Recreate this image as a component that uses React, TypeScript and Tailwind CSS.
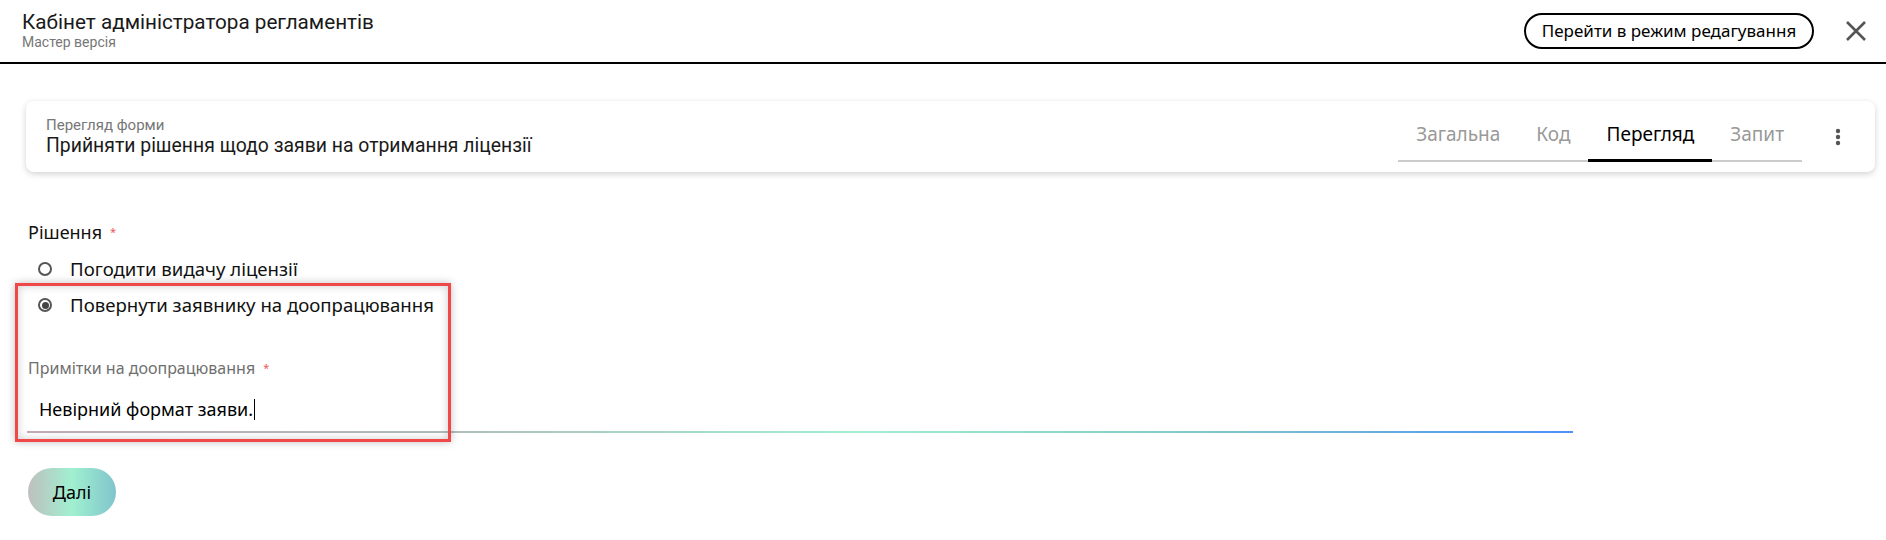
const tabs = [
  { label: "Загальна", active: false },
  { label: "Код", active: false },
  { label: "Перегляд", active: true },
  { label: "Запит", active: false },
];

const roboto = "font-['Roboto',_'Liberation_Sans',_sans-serif]";
const ua = "font-['Noto_Sans',_'Open_Sans',_sans-serif]";

function Radio({ checked, label }: { checked: boolean; label: string }) {
  return (
    <label className="flex h-[36px] items-center gap-[18px] pl-[10px]">
      <span className="flex size-[14px] items-center justify-center rounded-full border-2 border-[#555]">
        {checked && <span className="size-[7px] rounded-full bg-[#444]" />}
      </span>
      <span className={`${ua} text-[18.6px] text-[#111]`}>{label}</span>
    </label>
  );
}

export default function App() {
  return (
    <div className="relative min-h-[540px] w-[1886px] bg-white text-black">
      <header className="flex h-[64px] items-start justify-between border-b-2 border-black pl-[22px] pr-[19px]">
        <div className={`${roboto} pt-[10px]`}>
          <div className="text-[20.7px] leading-[24px] text-[#1a1a1a]">Кабінет адміністратора регламентів</div>
          <div className="text-[14px] leading-[16px] text-[#777]">Мастер версія</div>
        </div>
        <div className="flex items-center gap-[31px] pt-[13px]">
          <button className={`${ua} h-[36px] w-[290px] rounded-full border-2 border-black text-[17px] text-black`}>
            Перейти в режим редагування
          </button>
          <svg width="22" height="22" viewBox="0 0 22 22" className="text-[#555]">
            <path d="M2 2 L20 20 M20 2 L2 20" stroke="currentColor" strokeWidth="2.6" strokeLinecap="butt" />
          </svg>
        </div>
      </header>

      <section className="ml-[26px] mr-[11px] mt-[37px] flex h-[71px] items-center justify-between rounded-lg bg-white pl-[20px] pr-[34px] shadow-[0_2px_6px_rgba(0,0,0,0.18)]">
        <div className={roboto}>
          <div className="text-[15px] leading-[18px] text-[#777]">Перегляд форми</div>
          <div className="text-[19.4px] leading-[24px] text-[#1a1a1a]">Прийняти рішення щодо заяви на отримання ліцензії</div>
        </div>
        <div className="flex h-full items-center gap-[33px]">
          <nav className="mb-[10px] flex self-end border-b-2 border-[#ccc]">
            {tabs.map((t) => (
              <div
                key={t.label}
                className={`${ua} -mb-[2px] px-[18px] pb-[11px] text-[19px] ${
                  t.active ? "border-b-[3px] border-black text-black" : "border-b-[3px] border-transparent text-[#999]"
                }`}
              >
                {t.label}
              </div>
            ))}
          </nav>
          <svg width="6" height="18" viewBox="0 0 6 18" className="text-[#555]">
            <circle cx="3" cy="3" r="2.2" fill="currentColor" />
            <circle cx="3" cy="9" r="2.2" fill="currentColor" />
            <circle cx="3" cy="15" r="2.2" fill="currentColor" />
          </svg>
        </div>
      </section>

      <main className="pl-[28px] pt-[48px]">
        <div className={`${ua} flex items-center gap-[8px] text-[18px] leading-[24px] text-[#111]`}>
          Рішення <span className="text-[11px] text-[#e55]">*</span>
        </div>
        <div className="mt-[7px]">
          <Radio checked={false} label="Погодити видачу ліцензії" />
          <Radio checked label="Повернути заявнику на доопрацювання" />
        </div>

        <div className="-ml-[1px] mt-[35px] w-[1546px]">
          <div className={`${ua} flex items-center gap-[8px] pl-[1px] text-[16px] leading-[20px] text-[#6f6f6f]`}>
            Примітки на доопрацювання <span className="text-[11px] text-[#e55]">*</span>
          </div>
          <div className={`${ua} mt-[19px] flex items-center pl-[12px] text-[18px] leading-[24px] text-black`}>
            Невірний формат заяви.
            <span className="ml-[1px] h-[21px] w-px bg-black" />
          </div>
          <div className="mt-[10px] h-[2px] bg-[linear-gradient(90deg,#c4aab8_0%,#b0bcb8_26%,#a0f0d0_54%,#80c8c8_76%,#4f8ff7_100%)]" />
        </div>

        <button
          className={`${ua} mt-[35px] h-[48px] w-[88px] rounded-full bg-[linear-gradient(90deg,#bfbfbf_0%,#a0f0d0_50%,#80c4cc_100%)] text-[18px] text-black`}
        >
          Далі
        </button>
      </main>

      <div className="pointer-events-none absolute left-[15px] top-[283px] h-[159px] w-[436px] border-[3px] border-[#f04848] shadow-[0_0_8px_rgba(0,0,0,0.25),inset_0_0_8px_rgba(0,0,0,0.2)]" />
    </div>
  );
}
